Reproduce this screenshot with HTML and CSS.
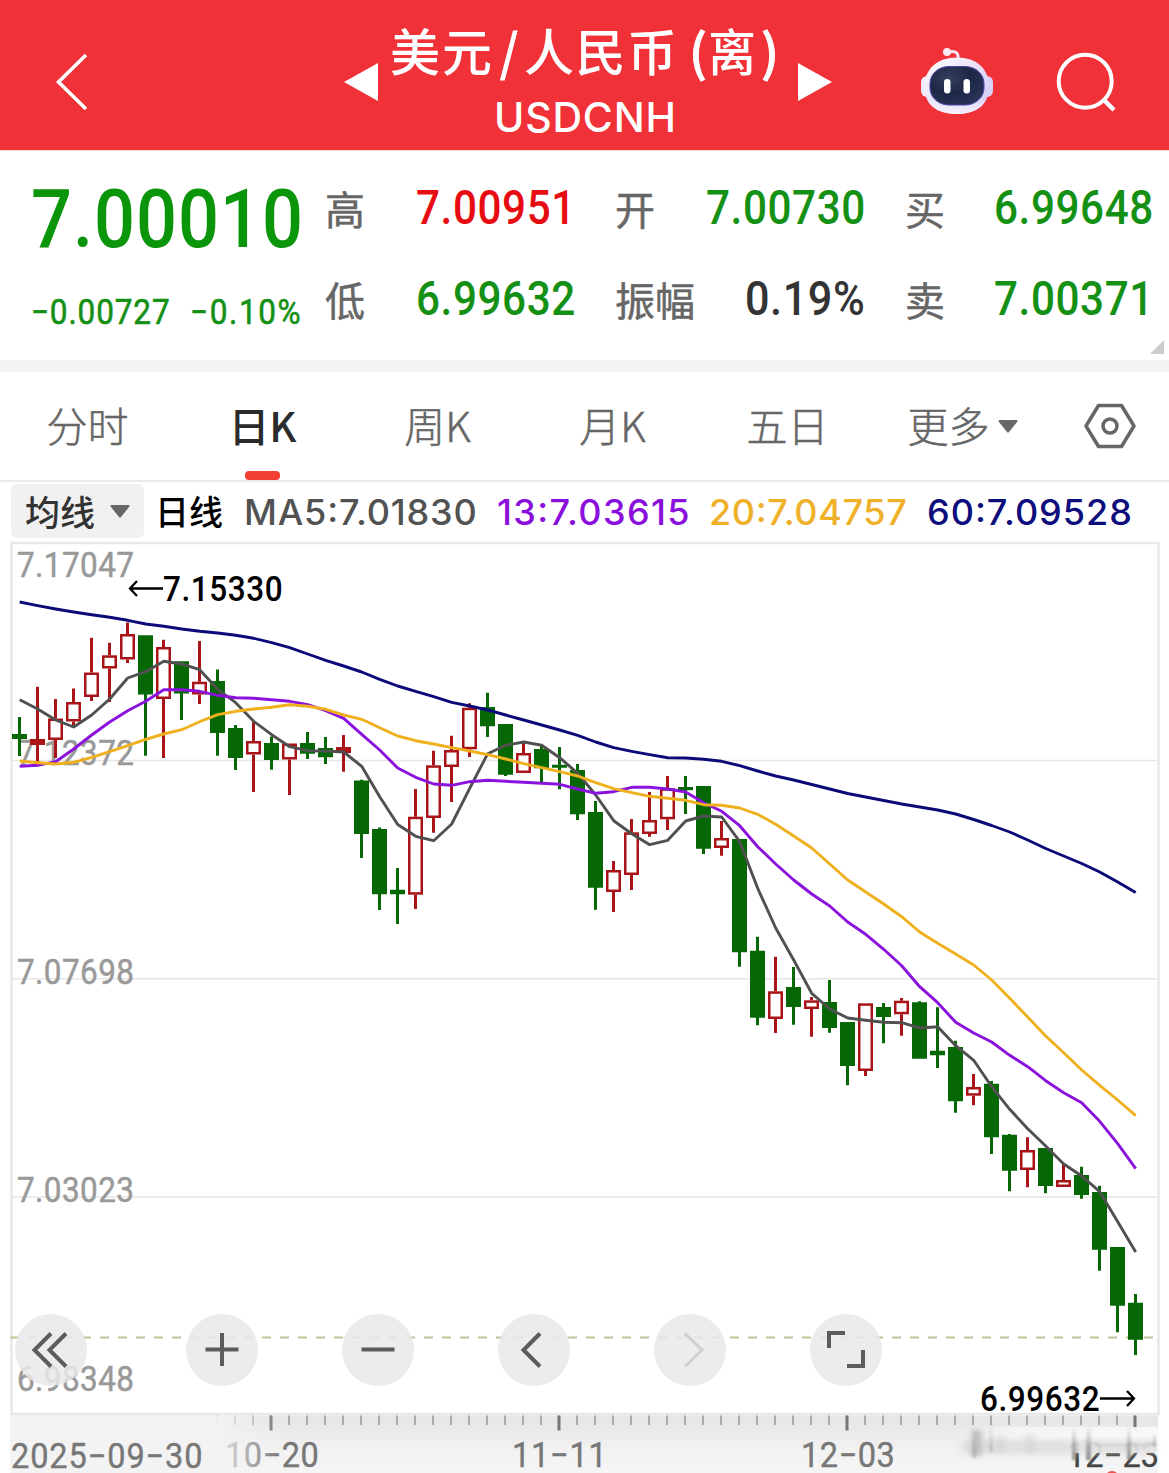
FILE: index.html
```html
<!DOCTYPE html>
<html lang="zh-CN">
<head>
<meta charset="utf-8">
<title>美元/人民币(离) USDCNH</title>
<link rel="stylesheet" href="styles.css">
</head>
<body>
<header class="topbar">
  <svg class="back" width="46" height="64" viewBox="50 50 46 64"><path d="M86 55 58.500 82 86 109" fill="none" stroke="#fff" stroke-width="3.600"/></svg>
  <svg class="prev" width="35" height="40" viewBox="344 62 35 40"><path d="M344 82 378 63V101Z" fill="#fff"/></svg>
  <svg class="title" width="410" height="150" viewBox="380 0 410 150">
    <g class="title-name" fill="#fff">
      <text x="390" y="71" textLength="102">美元</text>
      <text x="500" y="71" stroke="#fff" textLength="18" lengthAdjust="spacingAndGlyphs">/</text>
      <text x="524" y="71" textLength="153">人民币</text>
      <text x="689" y="71" stroke="#fff" textLength="18" lengthAdjust="spacingAndGlyphs">(</text>
      <text x="708" y="71" textLength="48" lengthAdjust="spacingAndGlyphs">离</text>
      <text x="761" y="71" stroke="#fff" textLength="18" lengthAdjust="spacingAndGlyphs">)</text>
    </g>
    <text class="title-code" x="494" y="132" textLength="182">USDCNH</text>
  </svg>
  <svg class="next" width="35" height="40" viewBox="798 62 35 40"><path d="M832 82 798 63V101Z" fill="#fff"/></svg>
  <svg class="robot" width="74" height="70" viewBox="920 46 74 70">
    <defs>
      <linearGradient id="shell" x1="0" y1="0" x2="1" y2="1"><stop offset="0" stop-color="#fff"/><stop offset=".55" stop-color="#e4dcf8"/><stop offset="1" stop-color="#cfc8f6"/></linearGradient>
      <linearGradient id="chin" x1="0" y1="0" x2="0" y2="1"><stop offset=".72" stop-color="#fff" stop-opacity="0"/><stop offset="1" stop-color="#f6effc"/></linearGradient>
      <radialGradient id="visor" cx=".35" cy=".3" r=".8"><stop offset="0" stop-color="#35405f"/><stop offset=".5" stop-color="#1d2746"/><stop offset="1" stop-color="#2a3558"/></radialGradient>
    </defs>
    <path d="M948 52C956 50 959 53 958 60" fill="none" stroke="#f5e4f1" stroke-width="3"/>
    <circle cx="947" cy="52" r="4" fill="#fbe9f2"/>
    <rect x="921" y="76" width="12" height="21" rx="6" fill="#f1eafd"/>
    <rect x="981" y="76" width="12" height="21" rx="6" fill="#d9d0f8"/>
    <path d="M957 57.500C977 57.500 989 69 989 87 989 105 976 114 957 114 937 114 924.500 105 924.500 87 924.500 69 937 57.500 957 57.500Z" fill="url(#shell)"/>
    <path d="M957 57.500C977 57.500 989 69 989 87 989 105 976 114 957 114 937 114 924.500 105 924.500 87 924.500 69 937 57.500 957 57.500Z" fill="url(#chin)"/>
    <rect x="930" y="66.500" width="54" height="38.500" rx="19" ry="17" fill="url(#visor)" stroke="#4c44a8" stroke-width="1"/>
    <rect x="944" y="79" width="6.500" height="14.500" rx="3.200" fill="#fff"/>
    <rect x="963.500" y="79" width="6.500" height="14.500" rx="3.200" fill="#fff"/>
  </svg>
  <svg class="search" width="64" height="64" viewBox="1054 50 64 64" fill="none" stroke="#fff"><circle cx="1085.200" cy="81.200" r="26.500" stroke-width="4"/><path d="M1103.500 99.500 1114 110" stroke-width="4.500"/></svg>
</header>

<section class="quote">
  <div class="price">
    <svg width="274" height="80"><text class="last down" transform="translate(0 67) scale(.88 1)" textLength="309">7.00010</text></svg>
    <div class="change">
      <svg width="141" height="40"><text class="delta down" transform="translate(0 32) scale(.9 1)" textLength="154">−0.00727</text></svg>
      <svg width="114" height="40"><text class="delta down" transform="translate(0 32) scale(.9 1)" textLength="123">−0.10%</text></svg>
    </div>
  </div>
  <div class="stats">
    <div class="stat"><span>高</span><svg width="162" height="50"><text class="val up" transform="translate(2 41) scale(.88 1)" textLength="181">7.00951</text></svg></div>
    <div class="stat"><span>开</span><svg width="162" height="50"><text class="val down" transform="translate(2 41) scale(.88 1)" textLength="181">7.00730</text></svg></div>
    <div class="stat"><span>买</span><svg width="162" height="50"><text class="val down" transform="translate(2 41) scale(.88 1)" textLength="181">6.99648</text></svg></div>
    <div class="stat"><span>低</span><svg width="162" height="50"><text class="val down" transform="translate(2 41) scale(.88 1)" textLength="181">6.99632</text></svg></div>
    <div class="stat"><span>振幅</span><svg width="122" height="50"><text class="val" transform="translate(1 41) scale(.9 1)" textLength="133">0.19%</text></svg></div>
    <div class="stat"><span>卖</span><svg width="162" height="50"><text class="val down" transform="translate(2 41) scale(.88 1)" textLength="181">7.00371</text></svg></div>
  </div>
  <i class="corner"></i>
</section>

<nav class="tabs">
  <a class="tab">分时</a>
  <a class="tab active">日K</a>
  <a class="tab">周K</a>
  <a class="tab">月K</a>
  <a class="tab">五日</a>
  <a class="tab">更多<svg class="caret" width="20" height="13"><path d="M1 0H19Q20 1 19 2L11 12Q10 13 9 12L1 2Q0 1 1 0Z" fill="#666"/></svg></a>
  <a class="settings"><svg width="54" height="48" viewBox="1083 402 54 48" fill="none" stroke="#666" stroke-width="3.500" stroke-linejoin="round"><path d="M1086 426 1098.500 405.500H1121.500L1134 426 1121.500 446.500H1098.500Z"/><circle cx="1110" cy="426" r="7"/></svg></a>
</nav>

<div class="legend">
  <button class="picker">均线<svg width="20" height="13"><path d="M1 0H19Q20 1 19 2L11 12Q10 13 9 12L1 2Q0 1 1 0Z" fill="#666"/></svg></button>
  <span class="period">日线</span>
  <svg width="234" height="50"><text transform="translate(-1 39) scale(1.030 1)" fill="#525252" textLength="226">MA5:7.01830</text></svg>
  <svg width="194" height="50"><text transform="translate(0 39) scale(1.030 1)" fill="#8a0fdc" textLength="187">13:7.03615</text></svg>
  <svg width="200" height="50"><text transform="translate(0 39) scale(1.030 1)" fill="#efb02a" textLength="192">20:7.04757</text></svg>
  <svg width="207" height="50"><text transform="translate(0 39) scale(1.030 1)" fill="#0d0d7c" textLength="199">60:7.09528</text></svg>
</div>

<main class="chart">
  <svg id="plot" width="1169" height="933" viewBox="0 540 1169 933">
    <defs>
      <linearGradient id="axisBg" x1="0" y1="0" x2="0" y2="1"><stop offset="0" stop-color="#e5e5e5"/><stop offset=".6" stop-color="#f2f2f2"/><stop offset="1" stop-color="#f5f5f5"/></linearGradient>
      <linearGradient id="axisFade" x1="0" x2="1"><stop offset="0" stop-color="#f3f3f3"/><stop offset=".74" stop-color="#f3f3f3"/><stop offset="1" stop-color="#f3f3f3" stop-opacity="0"/></linearGradient>
      <linearGradient id="smear" x1="0" x2="1"><stop offset="0" stop-color="#f4f4f4" stop-opacity="0"/><stop offset=".3" stop-color="#f6f6f6" stop-opacity=".8"/><stop offset="1" stop-color="#fafafa" stop-opacity=".9"/></linearGradient>
      <linearGradient id="streak" x1="0" y1="0" x2="0" y2="1"><stop offset="0" stop-color="#888" stop-opacity="0"/><stop offset="1" stop-color="#777" stop-opacity=".8"/></linearGradient>
      <filter id="soft" x="-20%" y="-20%" width="140%" height="140%"><feGaussianBlur stdDeviation="3 2.500"/></filter>
      <filter id="softer" x="-20%" y="-20%" width="140%" height="140%"><feGaussianBlur stdDeviation="1.300 1"/></filter>
    </defs>
    <rect x="11.500" y="543" width="1147" height="871" fill="#fff" stroke="#e8e8e8" stroke-width="2.500"/>
    <path d="M12 760.500H1158M12 978.700H1158M12 1197H1158" stroke="#e6e6e6" stroke-width="1.500"/>
    <g class="scale">
      <text transform="translate(17 577) scale(.9 1)" textLength="130">7.17047</text>
      <text transform="translate(17 765) scale(.9 1)" textLength="130">7.12372</text>
      <text transform="translate(17 984) scale(.9 1)" textLength="130">7.07698</text>
      <text transform="translate(17 1202) scale(.9 1)" textLength="130">7.03023</text>
      <text transform="translate(17 1391) scale(.9 1)" textLength="130">6.98348</text>
    </g>
    <path d="M10 1337.500H1158" stroke="#c3c299" stroke-width="1.800" stroke-dasharray="9 9"/>
    <g id="candles"></g>
    <g id="averages" fill="none" stroke-width="2.900" stroke-linejoin="round"></g>
    <g class="peak">
      <path d="M163 588.500H130M137 581 130 588.500 137 596M1100 1398.500H1134M1127 1391 1134 1398.500 1127 1406" fill="none" stroke="#000" stroke-width="2.300"/>
      <text transform="translate(163 601) scale(.9 1)" textLength="133">7.15330</text>
      <text transform="translate(980 1411) scale(.9 1)" textLength="133">6.99632</text>
    </g>
    <rect x="10" y="1415.500" width="1148" height="58" fill="url(#axisBg)"/>
    <path id="minor" stroke="#aaa" stroke-width="2"/>
    <path d="M271 1415.500V1430.500M559 1415.500V1430.500M847 1415.500V1430.500M1135 1415.500V1430.500" stroke="#777" stroke-width="3"/>
    <g class="dates">
      <text transform="translate(225 1467) scale(.93 1)" textLength="101">10−20</text>
      <text transform="translate(512 1467) scale(.93 1)" textLength="102">11−11</text>
      <text transform="translate(801 1467) scale(.93 1)" textLength="101">12−03</text>
      <text transform="translate(1067 1467) scale(.93 1)" class="today" textLength="99">12−23</text>
      <rect x="10" y="1415.500" width="270" height="58" fill="url(#axisFade)"/>
      <text transform="translate(11 1468) scale(.93 1)" textLength="206">2025−09−30</text>
    </g>
    <rect x="955" y="1427" width="204" height="26" fill="url(#smear)"/>
    <g filter="url(#soft)">
      <path d="M962 1447H1155" stroke="#ccc" stroke-width="14" opacity=".5"/>
      <path d="M977 1430V1456" stroke="#bbb" stroke-width="9"/>
      <path d="M1000 1436V1454M1030 1434V1454" stroke="#ccc" stroke-width="8" opacity=".5"/>
    </g>
    <g filter="url(#softer)" fill="url(#streak)">
      <rect x="972" y="1424" width="4" height="34" opacity=".4"/>
      <rect x="989" y="1422" width="4" height="30" opacity=".4"/>
      <rect x="1072" y="1426" width="4" height="34"/>
      <rect x="1086" y="1426" width="5" height="34"/>
      <rect x="1127" y="1426" width="4" height="34"/>
      <path d="M1095 1444H1155V1446H1095Z" opacity=".4"/>
      <rect x="1153" y="1432" width="3" height="14" opacity=".7"/>
    </g>
    <ellipse cx="1112" cy="1474" rx="5" ry="3" fill="#ee5550"/>
  </svg>
  <div class="controls">
    <button><svg viewBox="0 0 72 72"><path d="M36 19.500 19.500 36 36 52.500M51 19.500 34.500 36 51 52.500"/></svg></button>
    <button><svg viewBox="0 0 72 72"><path d="M19.500 35.500H52.500M36 19V52"/></svg></button>
    <button><svg viewBox="0 0 72 72"><path d="M19.500 35.500H52.500"/></svg></button>
    <button><svg viewBox="0 0 72 72"><path d="M42 19.500 25.500 36 42 52.500"/></svg></button>
    <button class="off"><svg viewBox="0 0 72 72"><path d="M31 19.500 48 36 31 52.500"/></svg></button>
    <button><svg viewBox="0 0 72 72"><path d="M19 34V19H35M53 36V52H37"/></svg></button>
  </div>
</main>
<script src="chart.js"></script>
</body>
</html>
```
FILE: styles.css
```css
* { box-sizing: border-box; }
body {
  margin: 0;
  width: 1169px;
  height: 1473px;
  overflow: hidden;
  background: #fff;
  font-family: Inter, "Noto Sans CJK SC", sans-serif;
}
svg { display: block; flex: none; overflow: visible; }
button { border: 0; padding: 0; font: inherit; }

.topbar {
  display: flex;
  align-items: center;
  height: 150px;
  padding: 14px 51px 0 50px;
  background: #f03137;
}
.prev { margin-left: 248px; }
.title { margin: -14px 8px 0 1px; }
.robot { margin: -2px 60px 0 87px; }
.title-name { font: 500 50px "Noto Sans CJK SC", sans-serif; }
.title-code { font: 500 41px Inter, sans-serif; fill: #fff; }

.quote {
  position: relative;
  display: flex;
  height: 222px;
  border-top: 1px solid #fcd9d2;
  border-bottom: 12px solid #f3f3f3;
}
.price { width: 325px; padding: 29px 0 0 31px; }
.change { display: flex; gap: 18px; margin-top: 32px; }
.last { font: 500 82px Roboto, sans-serif; }
.delta { font: 400 35px Roboto, sans-serif; stroke-width: .6px; }
.val { font: 500 48px Roboto, sans-serif; fill: #333; }
.down { fill: #0b950b; }
.val.down { fill: #149014; }
.delta.down { fill: #149014; stroke: #149014; }
.val.up { fill: #e60c12; }
.stats {
  display: grid;
  grid-template-columns: 251px 251px 249px;
  grid-template-rows: 50px 50px;
  column-gap: 39px;
  row-gap: 41px;
  padding-top: 32px;
}
.stat {
  display: flex;
  justify-content: space-between;
  align-items: flex-start;
  color: #666;
  font: 400 40px/50px "Noto Sans CJK SC", sans-serif;
  -webkit-text-stroke: .5px #666;
}
.stat svg { -webkit-text-stroke: 0; }
.corner {
  position: absolute;
  right: 5px;
  bottom: 6px;
  width: 14px;
  height: 14px;
  background: #ccc;
  clip-path: polygon(100% 0, 100% 100%, 0 100%);
}

.tabs {
  display: flex;
  height: 110px;
  border-bottom: 2px solid #ebebeb;
}
.tab, .settings {
  position: relative;
  display: flex;
  align-items: center;
  justify-content: center;
  width: 175px;
  color: #666;
  font: 300 41px/104px "Noto Sans CJK SC", sans-serif;
}
.tab { padding-bottom: 4px; -webkit-text-stroke: .5px #666; }
.settings { width: 119px; }
.caret { margin: 4px 0 0 8px; }
.active {
  color: #2b2b2b;
  font-weight: 500;
  -webkit-text-stroke: 0;
}
.active::after {
  content: "";
  position: absolute;
  left: 70px;
  bottom: 0;
  width: 35px;
  height: 9px;
  border-radius: 4px;
  background: #f13f33;
}

.legend {
  display: flex;
  align-items: center;
  height: 58px;
  padding: 0 0 0 11px;
  font: 500 34px/54px "Noto Sans CJK SC", sans-serif;
}
.legend text { font: 500 35px Inter, sans-serif; }
.picker {
  display: flex;
  align-items: center;
  justify-content: center;
  gap: 15px;
  width: 133px;
  height: 54px;
  border-radius: 6px;
  background: #f1f1f1;
  color: #333;
  font: 500 35px/54px "Noto Sans CJK SC", sans-serif;
}
.period { margin: 0 24px 0 11px; width: 66px; white-space: nowrap; }
.legend > svg { margin-right: 18px; }

.chart { position: relative; height: 933px; }
.scale { font: 400 35px Roboto, sans-serif; fill: #999; stroke: #999; stroke-width: .5px; }
.peak { font: 500 35px Roboto, sans-serif; }
.dates { font: 400 35px Roboto, sans-serif; fill: #777; }
.dates text { stroke: #777; stroke-width: .4px; }
.dates .today { fill: #444; stroke: #444; }
.controls {
  position: absolute;
  left: 15px;
  top: 774px;
  display: flex;
  gap: 84px;
}
.controls button {
  width: 72px;
  height: 72px;
  border-radius: 50%;
  background: rgba(233, 233, 233, .85);
}
.controls button:first-child { margin-right: 15px; }
.controls svg { width: 72px; height: 72px; fill: none; stroke: #5c5c5c; stroke-width: 4; }
.controls .off svg { stroke: #d0d0d0; stroke-width: 3; }
```
FILE: chart.js
```js
// Each candle: direction, high, body top, body bottom, low (chart y units)
const candles = [
  ['g',717,734,739,756],['r',686.7,739,745,762],['r',699,718.5,740,758],['r',688.5,702,721.5,726],
  ['r',637.7,672.5,697,701],['r',642.7,655.3,668.5,702],['r',622.5,634,659.5,663],['g',635.3,635.3,694.5,755.7],
  ['r',639.7,647,699,758],['g',661.3,661.3,693.5,720],['r',641,681.7,694.5,704],['g',669.5,681,733,755.7],
  ['g',725,728,758,770],['r',721.5,741,754.5,792],['g',736.5,743,760,769.7],['r',743.5,743.5,759.5,795],
  ['g',732,743,753.7,759],['g',737,748,757.3,764],['r',735,747,753,771.7],['g',779.7,780.5,834,858],
  ['g',827.5,829,894.3,910],['g',868,889.7,894.3,924],['r',789,816.7,894.7,909],['r',750.7,765.3,818,832.7],
  ['r',735.7,750,767,802],['r',703.3,707.7,749.3,757],['g',692.7,707,726.3,737],['g',724,724,774.7,776],
  ['r',741,753,773,773],['g',745,749,768.3,782.7],['g',747,764.7,767.7,789.3],['g',764,770,814.3,820],
  ['g',801,812,887.7,909.7],['r',861,870,892,912],['r',819,832.3,875,890],['r',792,820,834,836.7],
  ['r',776,788.3,819.3,830],['g',776,787,790.3,814],['g',786,786,848.7,854],['r',821,838,848,855.7],
  ['g',839,839,952.3,966.7],['g',936.7,950.7,1017.7,1025.3],['r',956.7,991.3,1019,1033],['g',967,987,1007,1024.7],
  ['r',997,1000.3,1009,1036.7],['g',980,1002,1028,1032.7],['g',1022,1022,1066,1085.3],['r',1003.3,1003.3,1071,1076],
  ['g',1003,1007,1017,1043.3],['r',998,1000.7,1014.3,1035.7],['g',1001.3,1002.3,1058.7,1058.7],['g',1007.3,1050.7,1055.3,1068],
  ['g',1040.7,1047,1101.3,1112.7],['r',1074,1087,1095.7,1105.3],['g',1081,1083.7,1137.3,1154],['g',1134,1134.7,1170.7,1191.3],
  ['r',1137.3,1150,1170,1187.3],['g',1148,1148,1186,1193.3],['r',1163.3,1180,1187,1187],['g',1166.7,1175,1195,1198.7],
  ['g',1185.7,1192,1249.7,1270.7],['g',1247,1247,1305.7,1332.3],['g',1294,1302.7,1339.7,1355]
];
const averages = {
  '#0a0a78': [602,605.7,609,612,614.7,617.3,620.3,624,626.3,629,631.3,633,635.3,638.3,642.7,647.7,654,660.3,666,672,679.3,686,691.3,696.7,702.3,706,710,715,720,725,730,735.3,742,747.7,751.3,754.7,757.7,758,759.3,761.3,765.7,771,776,780,784.5,789,793.5,797,800.5,804,807,810,814,819.5,825.5,832,840,848.5,856,863.5,872,882,892.5],
  '#505050': [699.7,709,720,727,715,699,678,671.7,661.3,664,669.7,689.3,702.7,721.3,734.7,746.7,750.7,751,752,766.3,796.7,824.5,836.3,840.7,824,788.3,753.7,745.3,742,745.3,757.7,773.3,795,820.7,833.7,844.7,840.3,821,816,817,841.7,888.3,928,960,993.3,1009,1018,1020.3,1022.3,1022.7,1028,1026.7,1045.7,1060.3,1086.7,1109.3,1128.7,1146,1164,1176,1191.7,1221.7,1252],
  '#8a12dc': [766.3,765.3,761.7,749,735,722,710.7,701.3,689.7,689.7,691.3,695.3,697.7,698.3,699.7,701.3,704.7,710.7,718.3,734.3,750,768,777.3,784,785.3,781.7,780.3,781.3,782.3,783.3,784.3,789,793.3,791.7,787.3,787.3,789,792,802.7,811.3,825.7,846.7,864,880,894,906,922,934.3,949.3,965.7,986.7,1002.7,1022.3,1033,1042,1055.3,1066.7,1080.7,1092.7,1102.7,1121.3,1143.7,1168.7],
  '#efb01e': [761,762.7,764,762.3,757.3,751.7,745.7,739.3,734,729.7,721.7,714.7,711.3,709,707.3,704.7,706.3,709.3,715,719.3,727.7,736,740.7,744,747.7,751,754.7,759,763.7,767.7,771.7,776,782.7,788.7,792.7,796.3,798.3,800.3,804.7,805.3,808,814.3,824.3,836,848,864,880,892,904,916.7,932,943.3,954,965,980,998.3,1017,1036,1052.7,1070,1085.3,1100,1115.7]
};
const make = (parent, tag, attrs) => {
  const el = document.createElementNS('http://www.w3.org/2000/svg', tag);
  for (const k in attrs) el.setAttribute(k, attrs[k]);
  parent.appendChild(el);
};
const group = document.getElementById('candles');
candles.forEach(([dir, high, top, bottom, low], i) => {
  const x = 12 + 18 * i;
  if (dir === 'g') {
    make(group, 'path', { fill: '#056805', d: `M${x + 6} ${high}h3V${low}h-3ZM${x} ${top}h15V${bottom}h-15Z` });
  } else {
    make(group, 'path', { fill: '#a81418', d: `M${x + 6} ${high}h3V${top}h-3ZM${x + 6} ${bottom}h3V${low}h-3Z` });
    make(group, 'rect', { x: x + 1.25, y: top + 1.25, width: 12.5, height: Math.max(bottom - top - 2.5, 1), fill: bottom - top < 6.5 ? '#b8181c' : '#fff', stroke: '#a81418', 'stroke-width': 2.5 });
  }
});
const lines = document.getElementById('averages');
for (const color in averages) {
  make(lines, 'polyline', { stroke: color, points: averages[color].map((y, i) => `${19.7 + 18 * i},${y}`).join(' ') });
}
let ticks = '';
for (let x = 217; x < 1150; x += 18) ticks += `M${x} 1415.5V1425`;
document.getElementById('minor').setAttribute('d', ticks);
```
